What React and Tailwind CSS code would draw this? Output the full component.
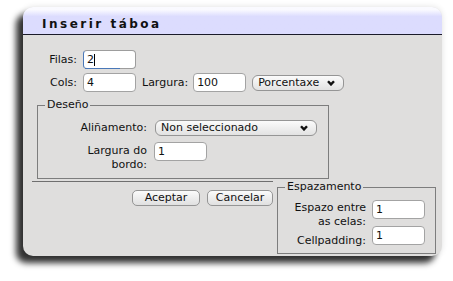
import React from 'react';

const Field = ({ value, width = 'w-[53px]', focused = false }) => (
  <div className={`relative h-[19px] ${width} shrink-0 rounded-[4px] border bg-white px-[3px] text-[11px] leading-[17px] text-[#111] ${focused ? 'border-[#9d9d9d] border-l-[#4a78b8]' : 'border-[#a3a3a3]'}`}>
    <span>{value}</span>
    {focused && (
      <>
        <span className="absolute left-[10px] top-[3px] h-[12px] w-[1px] bg-black" />
        <span className="absolute bottom-[-1px] left-[1px] h-[1px] w-[35px] bg-[#4a78b8]" />
      </>
    )}
  </div>
);

const Select = ({ label, width }) => (
  <div className={`flex h-[16px] ${width} shrink-0 items-center justify-between rounded-[6px] border border-[#959595] bg-gradient-to-b from-[#fbfbfb] to-[#e2e2e2] pl-[5px] pr-[8px] text-[11px] text-[#111]`}>
    <span>{label}</span>
    <svg width="8" height="6" viewBox="0 0 8 6">
      <path d="M1 1.2 L4 4.4 L7 1.2" fill="none" stroke="#111" strokeWidth="2.4" />
    </svg>
  </div>
);

const Button = ({ children, width }) => (
  <button className={`h-[16px] ${width} rounded-[5px] border border-[#959595] bg-gradient-to-b from-[#fbfbfb] to-[#e0e0e0] text-[11px] leading-[14px] text-[#111]`}>
    {children}
  </button>
);

export default function App() {
  return (
    <div className="h-[281px] w-[453px] overflow-hidden bg-white pl-[23px] pt-[7px] font-['DejaVu_Sans',sans-serif] text-[11px] leading-[14px] text-[#111]">
      <div className="flex h-[249px] w-[419px] flex-col overflow-hidden rounded-[10px] bg-[#dfdedd] shadow-[-7px_7px_6px_rgba(0,0,0,0.8),0_0_6px_rgba(0,0,0,0.12)]">
        {/* title bar */}
        <div className="h-[28px] shrink-0 border-b border-[#1b1b2a] bg-gradient-to-b from-[#fafaff] from-[10%] to-[#dcdcfe] to-[35%] pl-[19px] pt-[10px]">
          <h1 className="text-[12px] font-bold leading-[14px] tracking-[2.5px] text-[#111]">Inserir táboa</h1>
        </div>

        {/* rows */}
        <div className="mt-[15px] flex items-center">
          <span className="w-[54px] text-right">Filas:</span>
          <div className="ml-[6px]"><Field value="2" focused /></div>
        </div>
        <div className="mt-[4px] flex items-center">
          <span className="w-[54px] text-right">Cols:</span>
          <div className="ml-[6px]"><Field value="4" /></div>
          <span className="ml-[6px]">Largura:</span>
          <div className="ml-[5px]"><Field value="100" /></div>
          <div className="ml-[6px]"><Select label="Porcentaxe" width="w-[92px]" /></div>
        </div>

        {/* Deseño */}
        <fieldset className="ml-[14px] mt-[6px] w-[292px] border border-[#7d7d7d] pb-[6px]">
          <legend className="ml-[7px] px-[2px]">Deseño</legend>
          <div className="mt-[8px] flex items-center pl-[37px]">
            <span className="w-[72px] text-right">Aliñamento:</span>
            <div className="ml-[8px]"><Select label="Non seleccionado" width="w-[162px]" /></div>
          </div>
          <div className="mt-[6px] flex items-start pl-[37px]">
            <span className="mt-[2px] w-[72px] text-right">Largura do bordo:</span>
            <div className="ml-[7px]"><Field value="1" /></div>
          </div>
        </fieldset>

        {/* bottom */}
        <div className="mt-[1px] flex items-start">
          <div className="ml-[9px] mt-[1px] w-[241px] border-t border-[#6f6f6f]">
            <div className="mt-[8px] flex justify-end gap-[7px]">
              <Button width="w-[68px]">Aceptar</Button>
              <Button width="w-[66px]">Cancelar</Button>
            </div>
          </div>
          <fieldset className="ml-[4px] w-[159px] border border-[#7d7d7d] pb-[5px]">
            <legend className="ml-[7px] px-[2px]">Espazamento</legend>
            <div className="mt-[6px] flex pl-[8px]">
              <div className="flex w-[80px] flex-col text-right">
                <span className="mt-[1px]">Espazo entre as celas:</span>
                <span className="mt-[5px]">Cellpadding:</span>
              </div>
              <div className="ml-[6px] flex flex-col gap-[7px]">
                <Field value="1" />
                <Field value="1" />
              </div>
            </div>
          </fieldset>
        </div>
      </div>
    </div>
  );
}
